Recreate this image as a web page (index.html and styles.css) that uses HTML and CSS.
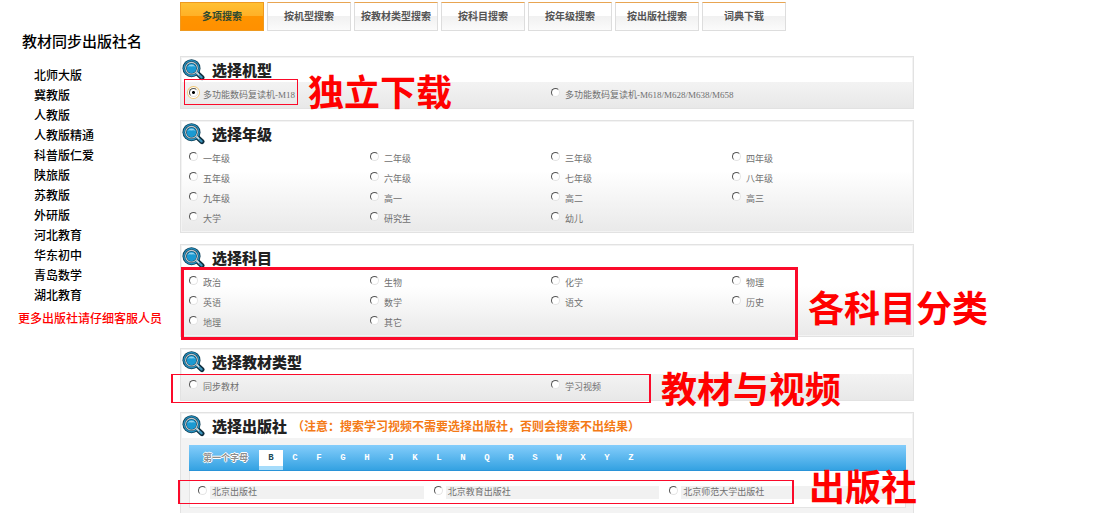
FILE: index.html
```html
<!DOCTYPE html>
<html lang="zh-CN">
<head>
<meta charset="utf-8">
<title>教材搜索</title>
<link rel="stylesheet" href="styles.css">
</head>
<body>
<svg class="defs" width="0" height="0" aria-hidden="true">
  <symbol id="magnifier" viewBox="0 0 24 22">
    <path d="M15 13 L21 18.6" stroke="#0c2c3c" stroke-width="5" stroke-linecap="round"/>
    <path d="M15 13.4 L20.6 18.4" stroke="#3d95bd" stroke-width="2.2" stroke-linecap="round"/>
    <circle cx="10.5" cy="9.2" r="9" fill="#0c3f57"/>
    <circle cx="10.5" cy="9.2" r="8.2" fill="#2490c0"/>
    <circle cx="10.5" cy="9.2" r="6.9" fill="#123c50"/>
    <circle cx="10.5" cy="9.2" r="6.4" fill="#c3c9cc"/>
    <circle cx="10.5" cy="9.2" r="5.3" fill="#0b3f58"/>
    <circle cx="10.5" cy="9.4" r="4.8" fill="#1b9ad2"/>
    <path d="M6.6 7.8 Q10.5 3 14.4 7.8 Q12.5 6.8 10.5 7.6 Q8.5 6.8 6.6 7.8Z" fill="#8fd2ee"/>
    <path d="M15.4 13.4 L18 15.8" stroke="#d5dde0" stroke-width="1.6"/>
  </symbol>
</svg>

<div class="page">
  <aside class="sidebar">
    <h1 class="sidebar-title">教材同步出版社名</h1>
    <ul class="publishers">
      <li>北师大版</li>
      <li>冀教版</li>
      <li>人教版</li>
      <li>人教版精通</li>
      <li>科普版仁爱</li>
      <li>陕旅版</li>
      <li>苏教版</li>
      <li>外研版</li>
      <li>河北教育</li>
      <li>华东初中</li>
      <li>青岛数学</li>
      <li>湖北教育</li>
    </ul>
    <p class="sidebar-note">更多出版社请仔细客服人员</p>
  </aside>

  <main class="main">
    <nav class="tabs">
      <a class="tab tab-active" href="#">多项搜索</a>
      <a class="tab" href="#">按机型搜索</a>
      <a class="tab" href="#">按教材类型搜索</a>
      <a class="tab" href="#">按科目搜索</a>
      <a class="tab" href="#">按年级搜索</a>
      <a class="tab" href="#">按出版社搜索</a>
      <a class="tab" href="#">词典下载</a>
    </nav>

    <form class="panels">
      <section class="panel">
        <h2 class="panel-head"><svg class="icon"><use href="#magnifier"/></svg>选择机型</h2>
        <div class="options options-2 shaded">
          <label class="option"><input type="radio" name="model" checked>多功能数码复读机-M18</label>
          <label class="option"><input type="radio" name="model">多功能数码复读机-M618/M628/M638/M658</label>
        </div>
        <span class="frame frame-model"></span>
        <strong class="callout callout-model">独立下载</strong>
      </section>

      <section class="panel panel-fade">
        <h2 class="panel-head"><svg class="icon"><use href="#magnifier"/></svg>选择年级</h2>
        <div class="options">
          <label class="option"><input type="radio" name="grade">一年级</label>
          <label class="option"><input type="radio" name="grade">二年级</label>
          <label class="option"><input type="radio" name="grade">三年级</label>
          <label class="option"><input type="radio" name="grade">四年级</label>
          <label class="option"><input type="radio" name="grade">五年级</label>
          <label class="option"><input type="radio" name="grade">六年级</label>
          <label class="option"><input type="radio" name="grade">七年级</label>
          <label class="option"><input type="radio" name="grade">八年级</label>
          <label class="option"><input type="radio" name="grade">九年级</label>
          <label class="option"><input type="radio" name="grade">高一</label>
          <label class="option"><input type="radio" name="grade">高二</label>
          <label class="option"><input type="radio" name="grade">高三</label>
          <label class="option"><input type="radio" name="grade">大学</label>
          <label class="option"><input type="radio" name="grade">研究生</label>
          <label class="option"><input type="radio" name="grade">幼儿</label>
        </div>
      </section>

      <section class="panel panel-fade">
        <h2 class="panel-head"><svg class="icon"><use href="#magnifier"/></svg>选择科目</h2>
        <div class="options">
          <label class="option"><input type="radio" name="subject">政治</label>
          <label class="option"><input type="radio" name="subject">生物</label>
          <label class="option"><input type="radio" name="subject">化学</label>
          <label class="option"><input type="radio" name="subject">物理</label>
          <label class="option"><input type="radio" name="subject">英语</label>
          <label class="option"><input type="radio" name="subject">数学</label>
          <label class="option"><input type="radio" name="subject">语文</label>
          <label class="option"><input type="radio" name="subject">历史</label>
          <label class="option"><input type="radio" name="subject">地理</label>
          <label class="option"><input type="radio" name="subject">其它</label>
        </div>
        <span class="frame frame-subject"></span>
        <strong class="callout callout-subject">各科目分类</strong>
      </section>

      <section class="panel">
        <h2 class="panel-head"><svg class="icon"><use href="#magnifier"/></svg>选择教材类型</h2>
        <div class="options options-2 shaded">
          <label class="option"><input type="radio" name="type">同步教材</label>
          <label class="option"><input type="radio" name="type">学习视频</label>
        </div>
        <span class="frame frame-type"></span>
        <strong class="callout callout-type">教材与视频</strong>
      </section>

      <section class="panel panel-last">
        <h2 class="panel-head"><svg class="icon"><use href="#magnifier"/></svg>选择出版社<span class="hint">（注意：搜索学习视频不需要选择出版社，否则会搜索不出结果）</span></h2>
        <div class="publisher-body">
          <div class="letters">
            <span class="letters-label">第一个字母</span>
            <button type="button" class="letter letter-active">B</button>
            <button type="button" class="letter">C</button>
            <button type="button" class="letter">F</button>
            <button type="button" class="letter">G</button>
            <button type="button" class="letter">H</button>
            <button type="button" class="letter">J</button>
            <button type="button" class="letter">K</button>
            <button type="button" class="letter">L</button>
            <button type="button" class="letter">N</button>
            <button type="button" class="letter">Q</button>
            <button type="button" class="letter">R</button>
            <button type="button" class="letter">S</button>
            <button type="button" class="letter">W</button>
            <button type="button" class="letter">X</button>
            <button type="button" class="letter">Y</button>
            <button type="button" class="letter">Z</button>
          </div>
          <div class="results">
            <label class="option result"><input type="radio" name="publisher"><span>北京出版社</span></label>
            <label class="option result"><input type="radio" name="publisher"><span>北京教育出版社</span></label>
            <label class="option result"><input type="radio" name="publisher"><span>北京师范大学出版社</span></label>
          </div>
        </div>
        <span class="frame frame-publisher"></span>
        <strong class="callout callout-publisher">出版社</strong>
      </section>
    </form>
  </main>
</div>
</body>
</html>
```
FILE: styles.css
```css
* {
  box-sizing: border-box;
}

body {
  margin: 0;
  background: #fff;
  color: #707070;
  font-family: "Liberation Serif", "Noto Sans CJK SC", sans-serif;
  font-size: 9px;
}

.defs {
  position: absolute;
}

.page {
  display: grid;
  grid-template-columns: 180px minmax(0, 1fr) 182px;
}

/* Sidebar */

.sidebar {
  padding-top: 31px;
  color: #000;
  font-family: "Noto Sans CJK SC", sans-serif;
  font-weight: 700;
  white-space: nowrap;
}

.sidebar-title {
  margin: 0 0 14px;
  padding-left: 22px;
  font-size: 15px;
  font-weight: 500;
  line-height: 20px;
}

.publishers {
  margin: 0;
  padding: 0 0 0 34px;
  list-style: none;
  font-size: 12px;
  font-weight: 500;
  line-height: 20px;
}

.sidebar-note {
  margin: 3px 0 0;
  padding-left: 18px;
  color: #f00;
  font-size: 12px;
  font-weight: 500;
  line-height: 20px;
}

/* Tabs */

.tabs {
  display: flex;
  gap: 3px;
  padding-top: 2px;
}

.tab {
  width: 84px;
  height: 29px;
  border: 1px solid #ddd;
  border-top: 1px solid #e8a552;
  background: linear-gradient(#fff 0 50%, #f1f1f1 50%, #fbfbfb);
  color: #555;
  font-size: 10px;
  font-weight: 700;
  line-height: 27px;
  text-align: center;
  text-decoration: none;
}

.tab-active {
  border-color: #ee9a20;
  background: linear-gradient(#ffc033, #ffb026 50%, #ff9400 50%, #ff9000);
  color: #2f4a30;
}

/* Panels */

.panels {
  display: flex;
  flex-direction: column;
  gap: 11px;
  padding-top: 25px;
}

.panel {
  position: relative;
  border: 1px solid #e2e2e2;
  box-shadow: inset 0 0 0 1px #f3f3f3;
  background: #fff;
}

.panel-fade {
  background: linear-gradient(#fff 45%, #e9e9e9);
}

.panel-head {
  display: flex;
  align-items: center;
  height: 25px;
  margin: 0;
  color: #222;
  font-family: "Noto Sans CJK SC", sans-serif;
  font-size: 15px;
  font-weight: 900;
  line-height: 25px;
  white-space: nowrap;
}

.icon {
  flex: none;
  width: 24px;
  height: 22px;
  margin-right: 7px;
}

.hint {
  margin-left: 5px;
  color: #f47a16;
  font-size: 12px;
  font-weight: 700;
}

.options {
  display: grid;
  grid-template-columns: repeat(4, 1fr);
  padding: 2px 0 4px 8px;
}

.options-2 {
  grid-template-columns: repeat(2, 1fr);
}

.shaded {
  background: linear-gradient(#f3f3f3, #e8e8e8);
}

.option {
  display: flex;
  align-items: center;
  gap: 5px;
  height: 20px;
  white-space: nowrap;
}

.option input {
  flex: none;
  appearance: none;
  width: 9px;
  height: 9px;
  margin: 0 0 4px;
  border: 1px solid #555;
  border-right-color: #e4e4e4;
  border-bottom-color: #e4e4e4;
  border-radius: 50%;
  background: #fff;
}

.option input:checked {
  background: radial-gradient(#000 0 1px, #fff 2px);
  box-shadow: 0 0 0 1px #fff, 0 0 0 2px #f0c878;
}

/* Publisher panel */

.panel-last {
  border-bottom: 0;
}

.publisher-body {
  padding: 7px 7px 7px 8px;
  background: #f3f3f3;
}

.letters {
  display: flex;
  align-items: stretch;
  height: 26px;
  padding-top: 5px;
  border-bottom: 1px solid #2a94d8;
  background: linear-gradient(#84cdfb, #34a2e2);
}

.letters-label {
  width: 70px;
  padding-left: 14px;
  color: #8d8d8d;
  font-family: "Noto Sans CJK SC", sans-serif;
  font-size: 9px;
  font-weight: 700;
  line-height: 15px;
  text-shadow: 1px 0 #fff, -1px 0 #fff, 0 1px #fff, 0 -1px #fff;
}

.letter {
  width: 24px;
  padding: 0 0 4px;
  border: 0;
  background: none;
  color: #fff;
  font-family: "Liberation Mono", monospace;
  font-size: 9px;
  font-weight: 700;
}

.letter-active {
  background: linear-gradient(#fff 0 16px, #a6dcfb 16px);
  color: #1c4a5a;
}

.results {
  display: grid;
  grid-template-columns: repeat(3, 1fr);
  padding: 12px 0 6px 8px;
  border: 1px solid #e4e4e4;
  border-top: 0;
  background: #fff;
}

.result {
  height: 18px;
  gap: 3px;
}

.result span {
  flex: 1;
  margin-right: 10px;
  padding-left: 2px;
  background: #f1f1f1;
  line-height: 13px;
}

/* Red marks drawn over the panels */

.frame {
  position: absolute;
  border: 1px solid #fb0a2a;
  pointer-events: none;
}

.frame-model {
  top: 22px;
  left: 3px;
  width: 114px;
  height: 26px;
}

.frame-subject {
  top: 22px;
  left: 0;
  right: 16%;
  height: 73px;
  margin-right: -2px;
  border-width: 3px;
}

.frame-type {
  top: 25px;
  left: -10px;
  right: 36%;
  height: 29px;
  margin-right: -2px;
  border-width: 1px 2px;
}

.frame-publisher {
  top: 67px;
  left: -3px;
  right: 16%;
  height: 24px;
  margin-right: 2px;
  border-width: 1px 2px;
}

.callout {
  position: absolute;
  color: #f00;
  font-family: "Noto Sans CJK SC", sans-serif;
  font-size: 36px;
  font-weight: 700;
  line-height: 36px;
  white-space: nowrap;
}

.callout-model {
  top: 15px;
  left: 127px;
}

.callout-subject {
  top: 43px;
  left: 627px;
}

.callout-type {
  top: 20px;
  left: 480px;
}

.callout-publisher {
  top: 54px;
  left: 628px;
}
```
